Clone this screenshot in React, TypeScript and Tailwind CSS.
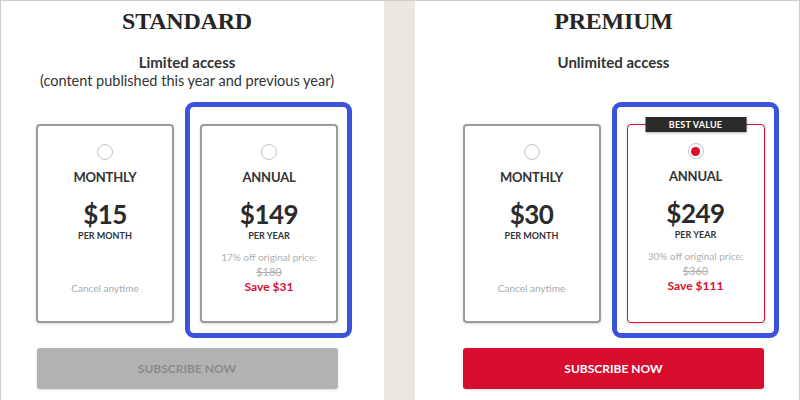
import React from "react";

const sans = { fontFamily: "Lato, 'Noto Sans', sans-serif" };

function Radio({ selected }: { selected?: boolean }) {
  return (
    <div className="w-[16px] h-[16px] rounded-full border-[1.5px] border-[#c4c4c4] bg-white flex items-center justify-center">
      {selected && <div className="w-[9px] h-[9px] rounded-full bg-[#d80f2f]" />}
    </div>
  );
}

function Card({
  label,
  price,
  per,
  selected,
  highlighted,
  bestValue,
  discount,
  original,
  save,
}: {
  label: string;
  price: string;
  per: string;
  selected?: boolean;
  highlighted?: boolean;
  bestValue?: boolean;
  discount?: string;
  original?: string;
  save?: string;
}) {
  return (
    <div className="relative">
      {highlighted && (
        <div className="absolute -left-[15px] -top-[22px] -right-[14px] -bottom-[15px] border-[5px] border-[#3b53d9] rounded-[9px] pointer-events-none" />
      )}
      <div
        className={
          "relative w-[138px] h-[199px] rounded-[4px] bg-white flex flex-col items-center pt-[18px] shadow-[0_1px_3px_rgba(0,0,0,0.15)] " +
          (selected ? "border-[1.5px] border-[#d8112f]" : "border-2 border-[#9b9b9b]")
        }
      >
        {bestValue && (
          <div className="absolute -top-[8px] left-1/2 -translate-x-1/2 w-[101px] h-[15px] bg-[#2b2b2b] text-white text-[9px] font-bold leading-[15px] text-center tracking-[0.2px] shadow-[0_1px_2px_rgba(0,0,0,0.3)]">
            BEST VALUE
          </div>
        )}
        <Radio selected={selected} />
        <div className="mt-[9px] text-[13px] leading-[16px] font-bold text-[#333] tracking-[-0.2px]">{label}</div>
        <div className="mt-[14px] text-[26px] leading-[30px] font-bold text-[#2b2b2b] tracking-[-0.5px]">{price}</div>
        <div className="mt-[1px] text-[9px] leading-[11px] font-bold text-[#333]">{per}</div>
        {discount ? (
          <>
            <div className="mt-[10px] text-[10px] leading-[13px] text-[#b0b0b0]">{discount}</div>
            <div className="mt-[1px] text-[11px] leading-[13px] text-[#b0b0b0] line-through">{original}</div>
            <div className="mt-[1px] text-[12px] leading-[15px] font-bold text-[#d80f2f]">{save}</div>
          </>
        ) : (
          <div className="mt-[41px] text-[10px] leading-[13px] text-[#aaa]">Cancel anytime</div>
        )}
      </div>
    </div>
  );
}

export default function App() {
  return (
    <div className="w-[800px] h-[400px] flex border-t border-l border-r border-[#cfcfcf] overflow-hidden bg-white" style={sans}>
      <div className="w-[383px] h-full bg-white pl-[35px]">
        <div className="w-[302px] flex flex-col items-center">
          <div className="mt-[5px] text-[24px] leading-[30px] font-bold text-[#262626] tracking-[-0.2px]" style={{ fontFamily: "'Liberation Serif', serif" }}>
            STANDARD
          </div>
          <div className="mt-[17px] text-[15px] leading-[18px] font-bold text-[#333]">Limited access</div>
          <div className="mt-[1px] text-[14.5px] leading-[18px] text-[#333]">(content published this year and previous year)</div>
          <div className="mt-[34px] flex gap-[26px]">
            <Card label="MONTHLY" price="$15" per="PER MONTH" />
            <Card
              label="ANNUAL"
              price="$149"
              per="PER YEAR"
              highlighted
              discount="17% off original price:"
              original="$180"
              save="Save $31"
            />
          </div>
          <div className="mt-[25px] w-[301px] h-[41px] rounded-[3px] bg-[#b2b2b2] flex items-center justify-center text-[12px] font-bold text-[#8a8a8a] shadow-[0_1px_3px_rgba(0,0,0,0.15)]">
            SUBSCRIBE NOW
          </div>
        </div>
      </div>
      <div className="w-[31px] h-full bg-[#ebe8e2]" />
      <div className="flex-1 h-full bg-white pl-[47px]">
        <div className="w-[303px] flex flex-col items-center">
          <div className="mt-[5px] text-[24px] leading-[30px] font-bold text-[#262626] tracking-[-0.2px]" style={{ fontFamily: "'Liberation Serif', serif" }}>
            PREMIUM
          </div>
          <div className="mt-[17px] text-[15px] leading-[18px] font-bold text-[#333]">Unlimited access</div>
          <div className="mt-[1px] h-[18px]" />
          <div className="mt-[34px] flex gap-[26px]">
            <Card label="MONTHLY" price="$30" per="PER MONTH" />
            <Card
              label="ANNUAL"
              price="$249"
              per="PER YEAR"
              highlighted
              selected
              bestValue
              discount="30% off original price:"
              original="$360"
              save="Save $111"
            />
          </div>
          <div className="mt-[25px] w-[301px] h-[41px] rounded-[3px] bg-[#d70d2e] flex items-center justify-center text-[12px] font-bold text-white shadow-[0_1px_3px_rgba(0,0,0,0.15)]">
            SUBSCRIBE NOW
          </div>
        </div>
      </div>
    </div>
  );
}
